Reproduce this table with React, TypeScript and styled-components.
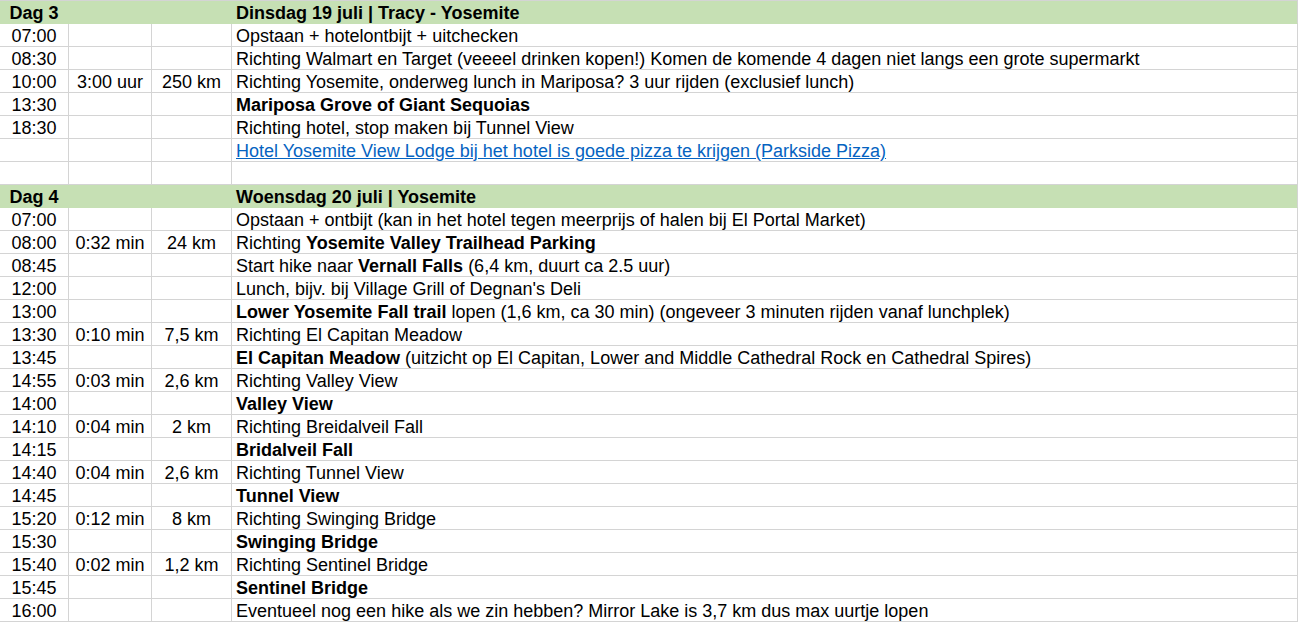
import React from "react";
import styled, { createGlobalStyle } from "styled-components";

const Global = createGlobalStyle`
  html, body { margin: 0; padding: 0; background: #ffffff; }
  body { font-family: "Liberation Sans", Arial, sans-serif; }
`;

const Sheet = styled.div`
  display: grid;
  grid-template-columns: 69px 83px 80px 1066px;
  width: 1298px;
  border-top: 1px solid #d4d4d4;
  font-family: "Liberation Sans", Arial, sans-serif;
  font-size: 18px;
  color: #000;
`;

const Cell = styled.div<{ $align?: "left" | "center"; $bold?: boolean; $head?: boolean; $noRight?: boolean }>`
  box-sizing: border-box;
  height: 23px;
  border-bottom: 1px solid ${(p) => (p.$head ? "#c6e0b4" : "#d4d4d4")};
  border-right: 1px solid ${(p) => (p.$noRight ? (p.$head ? "#c6e0b4" : "#d4d4d4") : "#d4d4d4")};
  background: ${(p) => (p.$head ? "#c6e0b4" : "#ffffff")};
  text-align: ${(p) => p.$align || "left"};
  font-weight: ${(p) => (p.$bold || p.$head ? 700 : 400)};
  padding: 3px 4px 0 4px;
  line-height: 18px;
  white-space: nowrap;
  overflow: visible;
`;

const Link = styled.a`
  color: #0563c1;
  text-decoration: underline;
`;

const B = styled.b`
  font-weight: 700;
`;

type Row =
  | { kind: "head"; day: string; title: string }
  | { kind: "row"; time?: string; dur?: string; dist?: string; text?: React.ReactNode; bold?: boolean };

const rows: Row[] = [
  { kind: "head", day: "Dag 3", title: "Dinsdag 19 juli | Tracy - Yosemite" },
  { kind: "row", time: "07:00", text: "Opstaan + hotelontbijt + uitchecken" },
  { kind: "row", time: "08:30", text: "Richting Walmart en Target (veeeel drinken kopen!) Komen de komende 4 dagen niet langs een grote supermarkt" },
  { kind: "row", time: "10:00", dur: "3:00 uur", dist: "250 km", text: "Richting Yosemite, onderweg lunch in Mariposa? 3 uur rijden (exclusief lunch)" },
  { kind: "row", time: "13:30", text: "Mariposa Grove of Giant Sequoias", bold: true },
  { kind: "row", time: "18:30", text: "Richting hotel, stop maken bij Tunnel View" },
  { kind: "row", text: <Link href="#">Hotel Yosemite View Lodge bij het hotel is goede pizza te krijgen (Parkside Pizza)</Link> },
  { kind: "row" },
  { kind: "head", day: "Dag 4", title: "Woensdag 20 juli | Yosemite" },
  { kind: "row", time: "07:00", text: "Opstaan + ontbijt (kan in het hotel tegen meerprijs of halen bij El Portal Market)" },
  { kind: "row", time: "08:00", dur: "0:32 min", dist: "24 km", text: <>Richting <B>Yosemite Valley Trailhead Parking</B></> },
  { kind: "row", time: "08:45", text: <>Start hike naar <B>Vernall Falls</B> (6,4 km, duurt ca 2.5 uur)</> },
  { kind: "row", time: "12:00", text: "Lunch, bijv. bij Village Grill of Degnan's Deli" },
  { kind: "row", time: "13:00", text: <><B>Lower Yosemite Fall trail</B> lopen (1,6 km, ca 30 min) (ongeveer 3 minuten rijden vanaf lunchplek)</> },
  { kind: "row", time: "13:30", dur: "0:10 min", dist: "7,5 km", text: "Richting El Capitan Meadow" },
  { kind: "row", time: "13:45", text: <><B>El Capitan Meadow</B> (uitzicht op El Capitan, Lower and Middle Cathedral Rock en Cathedral Spires)</> },
  { kind: "row", time: "14:55", dur: "0:03 min", dist: "2,6 km", text: "Richting Valley View" },
  { kind: "row", time: "14:00", text: "Valley View", bold: true },
  { kind: "row", time: "14:10", dur: "0:04 min", dist: "2 km", text: "Richting Breidalveil Fall" },
  { kind: "row", time: "14:15", text: "Bridalveil Fall", bold: true },
  { kind: "row", time: "14:40", dur: "0:04 min", dist: "2,6 km", text: "Richting Tunnel View" },
  { kind: "row", time: "14:45", text: "Tunnel View", bold: true },
  { kind: "row", time: "15:20", dur: "0:12 min", dist: "8 km", text: "Richting Swinging Bridge" },
  { kind: "row", time: "15:30", text: "Swinging Bridge", bold: true },
  { kind: "row", time: "15:40", dur: "0:02 min", dist: "1,2 km", text: "Richting Sentinel Bridge" },
  { kind: "row", time: "15:45", text: "Sentinel Bridge", bold: true },
  { kind: "row", time: "16:00", text: "Eventueel nog een hike als we zin hebben? Mirror Lake is 3,7 km dus max uurtje lopen" },
];

export default function App() {
  return (
    <>
      <Global />
      <Sheet>
        {rows.map((r, i) =>
          r.kind === "head" ? (
            <React.Fragment key={i}>
              <Cell $head $noRight $align="center">{r.day}</Cell>
              <Cell $head $noRight />
              <Cell $head $noRight />
              <Cell $head>{r.title}</Cell>
            </React.Fragment>
          ) : (
            <React.Fragment key={i}>
              <Cell $align="center">{r.time}</Cell>
              <Cell $align="center">{r.dur}</Cell>
              <Cell $align="center">{r.dist}</Cell>
              <Cell $bold={r.bold}>{r.text}</Cell>
            </React.Fragment>
          )
        )}
      </Sheet>
    </>
  );
}
